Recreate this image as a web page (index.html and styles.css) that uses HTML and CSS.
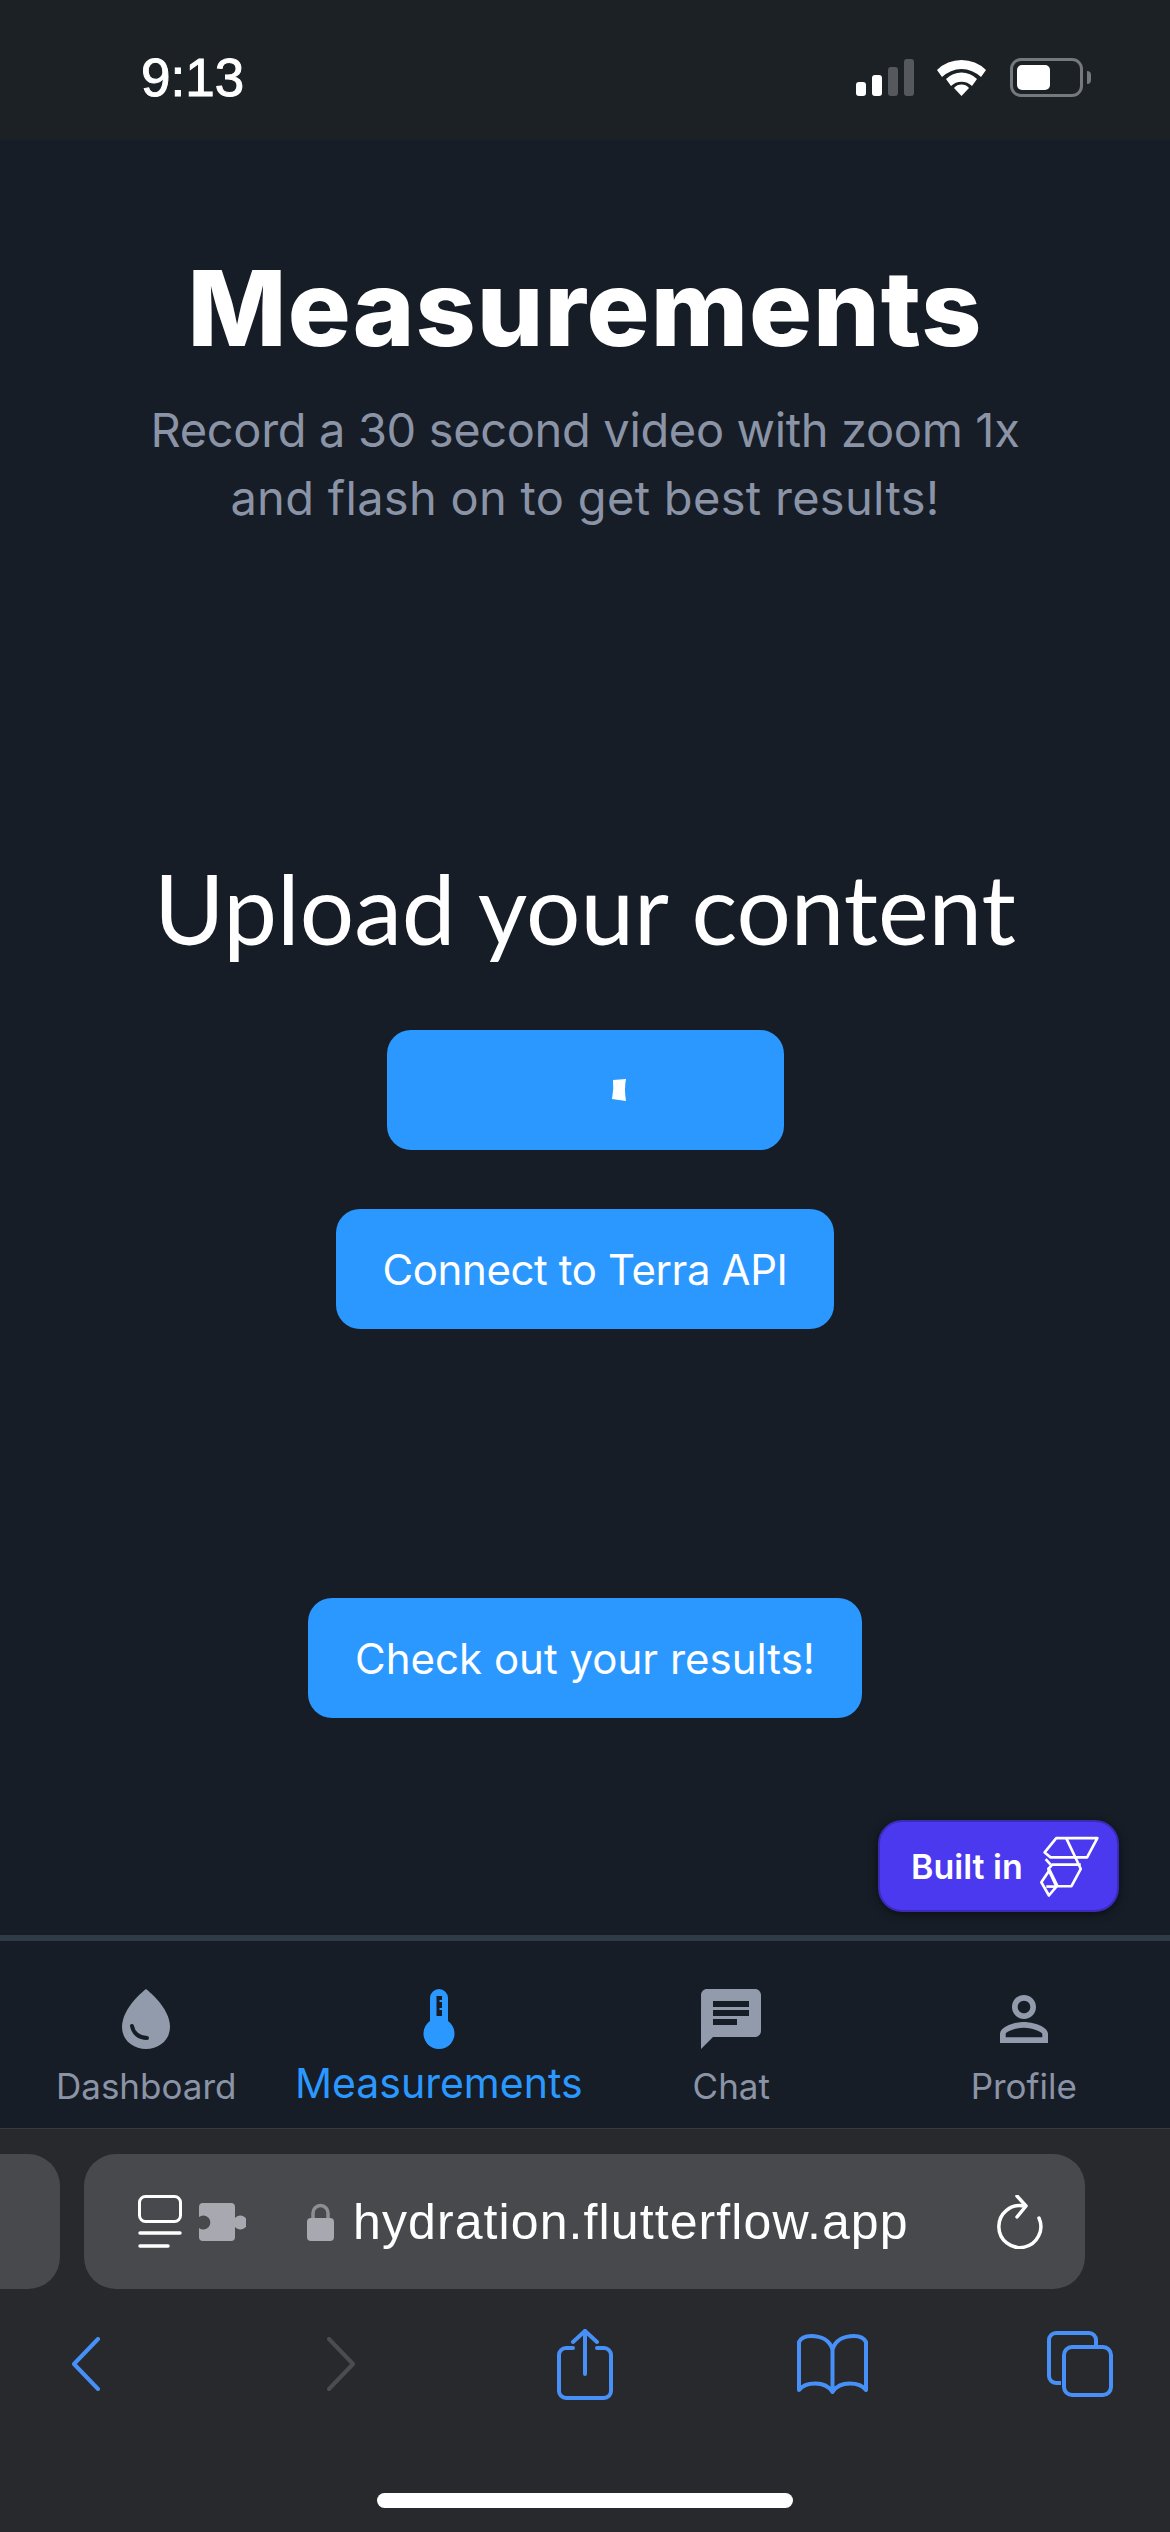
FILE: index.html

```html
<!DOCTYPE html>
<html lang="en">
<head>
  <meta charset="UTF-8">
  <meta name="viewport" content="width=device-width, initial-scale=1.0">
  <title>Measurements</title>
  <link rel="stylesheet" href="styles.css">
</head>
<body>
  <div class="phone">
    <div class="status-bar">
      <span class="status-time">9:13</span>
      <div class="status-icons">
        <div class="signal">
          <span class="bar bar-1"></span>
          <span class="bar bar-2"></span>
          <span class="bar bar-3 off"></span>
          <span class="bar bar-4 off"></span>
        </div>
        <svg class="wifi" width="49" height="37" viewBox="0 0 49 37">
          <path d="M0 11 A35 35 0 0 1 49 11 L44 18 A28 28 0 0 0 5 18 Z" fill="#fff"/>
          <path d="M9 22 A22 22 0 0 1 40 22 L35 29 A15 15 0 0 0 14 29 Z" fill="#fff" transform="translate(0 -2)"/>
          <path d="M17 29 A10 10 0 0 1 32 29 L24.5 37 Z" fill="#fff"/>
        </svg>
        <div class="battery">
          <span class="battery-fill"></span>
        </div>
        <span class="battery-cap"></span>
      </div>
    </div>

    <main class="content">
      <h1 class="page-title">Measurements</h1>
      <p class="page-sub">Record a 30 second video with zoom 1x<br><span class="sub-wide">and flash on to get best results!</span></p>
      <h2 class="upload-title">Upload your content</h2>
      <button class="btn btn-upload">
        <svg width="16" height="22" viewBox="0 0 16 22"><path d="M2 1 L15 0 Q13 10 15 22 L1 20 Q3 10 2 1 Z" fill="#fff"/></svg>
      </button>
      <button class="btn btn-terra">Connect to Terra API</button>
      <button class="btn btn-results">Check out your results!</button>

      <div class="built-in">
        <span>Built in</span>
        <svg width="63" height="65" viewBox="590 130 190 195" fill="none" stroke="#fff" stroke-width="8" stroke-linejoin="round">
          <path d="M642 142 H766 L735 200 H625 L607 185 Z"/>
          <path d="M672 142 L702 205 L716 235 L688 287 H642 L618 235 L630 222 H716"/>
          <path d="M610 205 L625 222"/>
          <path d="M622 238 L645 285 L620 315 L597 275 Z"/>
          <path d="M612 288 H642"/>
        </svg>
      </div>
    </main>

    <nav class="tab-bar">
      <div class="tab">
        <svg class="tab-icon" width="72" height="72" viewBox="0 0 72 72">
          <path d="M36 6 C36 6 12 24 12 44 C12 57 23 66 36 66 C49 66 60 57 60 44 C60 24 36 6 36 6 Z" fill="#929bab"/>
          <path d="M22 43 C23 50 29 55 37 55" fill="none" stroke="#161d26" stroke-width="4" stroke-linecap="round"/>
        </svg>
        <span class="tab-label">Dashboard</span>
      </div>
      <div class="tab active">
        <svg class="tab-icon" width="72" height="72" viewBox="0 0 72 72">
          <path d="M27 15 A9 9 0 0 1 45 15 V38 A15.5 15.5 0 1 1 27 38 Z" fill="#2b98ff"/>
          <path d="M33.5 13 H39 V17 H36.5 V19 H39 V25 H36.5 V27 H39 V33 H33.5 Z" fill="#161d26"/>
        </svg>
        <span class="tab-label">Measurements</span>
      </div>
      <div class="tab">
        <svg class="tab-icon" width="72" height="72" viewBox="0 0 24 24">
          <path d="M20 2H4c-1.1 0-1.99.9-1.99 2L2 22l4-4h14c1.1 0 2-.9 2-2V4c0-1.1-.9-2-2-2zM6 9h12v2H6V9zm8 5H6v-2h8v2zm4-6H6V6h12v2z" fill="#929bab"/>
        </svg>
        <span class="tab-label">Chat</span>
      </div>
      <div class="tab">
        <svg class="tab-icon" width="72" height="72" viewBox="0 0 24 24">
          <path d="M12 5.9c1.16 0 2.1.94 2.1 2.1s-.94 2.1-2.1 2.1S9.9 9.16 9.9 8s.94-2.1 2.1-2.1m0 9c2.97 0 6.1 1.46 6.1 2.1v1.1H5.9V17c0-.64 3.13-2.1 6.1-2.1M12 4C9.79 4 8 5.79 8 8s1.79 4 4 4 4-1.79 4-4-1.79-4-4-4zm0 9c-2.67 0-8 1.34-8 4v3h16v-3c0-2.66-5.33-4-8-4z" fill="#929bab"/>
        </svg>
        <span class="tab-label">Profile</span>
      </div>
    </nav>

    <div class="browser">
      <div class="url-row">
        <div class="prev-tab"></div>
        <div class="url-bar">
          <svg class="reader" width="44" height="53" viewBox="0 0 44 53" fill="none" stroke="#fff" stroke-linecap="round">
            <rect x="1.5" y="1.5" width="41" height="25" rx="6" stroke-width="3"/>
            <path d="M2 38 H42" stroke-width="3.5"/>
            <path d="M2 51 H30" stroke-width="3.5"/>
          </svg>
          <svg class="puzzle" width="47" height="38" viewBox="0 0 47 38">
            <path d="M4 0 H32 A4 4 0 0 1 36 4 V15 A7 7 0 1 1 36 24 V34 A4 4 0 0 1 32 38 H4 A4 4 0 0 1 0 34 V25 A7 7 0 1 0 0 14 V4 A4 4 0 0 1 4 0 Z" fill="#a8a9b0"/>
          </svg>
          <svg class="lock" width="27" height="38" viewBox="0 0 27 38">
            <path d="M6 16 V10 A7.5 7.5 0 0 1 21 10 V16" fill="none" stroke="#8e8f94" stroke-width="3.5"/>
            <rect y="15" width="27" height="23" rx="4" fill="#a8a9b0"/>
          </svg>
          <span class="url-text">hydration.flutterflow.app</span>
          <svg class="reload" width="46" height="54" viewBox="0 0 46 54" fill="none" stroke="#fff" stroke-width="3.5" stroke-linecap="round" stroke-linejoin="round">
            <path d="M27 11 A21 21 0 1 0 42 23"/>
            <path d="M20 1 L29 11 L20 22"/>
          </svg>
        </div>
      </div>

      <div class="toolbar">
        <svg class="tool-back" width="28" height="54" viewBox="0 0 28 54" fill="none" stroke="#4790f7" stroke-width="4" stroke-linecap="round" stroke-linejoin="round">
          <path d="M26 2 L2 27 L26 52"/>
        </svg>
        <svg class="tool-forward" width="30" height="54" viewBox="0 0 30 54" fill="none" stroke="#4b4c4f" stroke-width="4" stroke-linecap="round" stroke-linejoin="round">
          <path d="M3 2 L27 27 L3 52"/>
        </svg>
        <svg class="tool-share" width="56" height="71" viewBox="0 0 56 71" fill="none" stroke="#4790f7" stroke-width="4" stroke-linecap="round" stroke-linejoin="round">
          <path d="M16 19 H9 A7 7 0 0 0 2 26 V62 A7 7 0 0 0 9 69 H47 A7 7 0 0 0 54 62 V26 A7 7 0 0 0 47 19 H40"/>
          <path d="M28 45 V2"/>
          <path d="M16 13 L28 2 L40 13"/>
        </svg>
        <svg class="tool-book" width="71" height="60" viewBox="0 0 71 60" fill="none" stroke="#4790f7" stroke-width="4" stroke-linecap="round" stroke-linejoin="round">
          <path d="M35.5 58 V16 C33 6 24 2 14 2 C8 2 4 4 2 8 V56 C8 48 28 46 35.5 58 C43 46 63 48 69 56 V8 C67 4 63 2 57 2 C47 2 38 6 35.5 16"/>
        </svg>
        <svg class="tool-tabs" width="66" height="66" viewBox="0 0 66 66" fill="none" stroke="#4790f7" stroke-width="4">
          <path d="M14 52 H9 A7 7 0 0 1 2 45 V9 A7 7 0 0 1 9 2 H42 A7 7 0 0 1 49 9 V15"/>
          <rect x="17" y="16" width="47" height="48" rx="8"/>
        </svg>
      </div>
      <div class="home-indicator"></div>
    </div>
  </div>
</body>
</html>
```

FILE: styles.css

```css
* {
  box-sizing: border-box;
}
body {
  margin: 0;
  background-color: #161d26;
  font-family: Inter, sans-serif;
}
.phone {
  position: relative;
  width: 1170px;
  height: 2532px;
  display: flex;
  flex-direction: column;
  overflow: hidden;
}

/* status bar */
.status-bar {
  height: 140px;
  flex: none;
  background-color: #1c2126;
  display: flex;
  justify-content: space-between;
  align-items: flex-start;
  padding: 49px 79px 0 141px;
}
.status-time {
  font-family: "Liberation Sans", sans-serif;
  font-size: 53px;
  line-height: 58px;
  color: #fff;
  -webkit-text-stroke: 1px #fff;
}
.status-icons {
  display: flex;
  align-items: center;
  margin-top: 9px;
}
.signal {
  display: flex;
  align-items: flex-end;
  gap: 6.5px;
  height: 37px;
  margin-right: 23px;
}
.bar {
  width: 9.6px;
  background-color: #fff;
  border-radius: 3px;
}
.bar.off {
  background-color: #55585c;
}
.bar-1 { height: 14px; }
.bar-2 { height: 21px; }
.bar-3 { height: 29px; }
.bar-4 { height: 37px; }
.wifi {
  margin-right: 24px;
}
.battery {
  width: 73px;
  height: 39px;
  border: 3px solid #75787c;
  border-radius: 11px;
  padding: 4px;
}
.battery-fill {
  display: block;
  width: 33px;
  height: 100%;
  background-color: #fff;
  border-radius: 5px;
}
.battery-cap {
  width: 4px;
  height: 13px;
  margin-left: 4px;
  background-color: #75787c;
  border-radius: 0 4px 4px 0;
}

/* page content */
.content {
  flex: 1;
  display: flex;
  flex-direction: column;
  align-items: center;
  padding-top: 105px;
}
.page-title {
  margin: 0;
  font-family: Inter, sans-serif;
  font-size: 105px;
  font-weight: 800;
  line-height: 126px;
  color: #fff;
  letter-spacing: 1px;
}
.page-sub {
  margin: 25px 0 0;
  font-size: 47px;
  line-height: 68px;
  font-weight: 400;
  text-align: center;
  color: #8b94a6;
  letter-spacing: -0.35px;
}
.sub-wide {
  letter-spacing: 0.3px;
}
.upload-title {
  margin: 318px 0 0;
  font-family: Lato, sans-serif;
  font-size: 96px;
  line-height: 116px;
  font-weight: 400;
  color: #fff;
}
.btn {
  display: flex;
  align-items: center;
  justify-content: center;
  height: 120px;
  border: 0;
  border-radius: 24px;
  background-color: #2b98ff;
  color: #fff;
  font-family: Inter, sans-serif;
  font-size: 42px;
  font-weight: 400;
  padding: 0;
}
.btn-upload {
  width: 397px;
  margin-top: 64px;
}
.btn-upload svg {
  margin-left: 68px;
}
.btn-terra {
  width: 498px;
  margin-top: 59px;
  letter-spacing: -0.4px;
}
.btn-results {
  width: 554px;
  margin-top: 269px;
}
.built-in {
  position: absolute;
  left: 878px;
  top: 1820px;
  width: 241px;
  height: 92px;
  display: flex;
  align-items: center;
  gap: 16px;
  padding-left: 31px;
  background-color: #4b39ef;
  border: 2px solid #3a2cb8;
  border-radius: 24px;
  box-shadow: 0 2px 8px rgba(0, 0, 0, 0.5);
  color: #fff;
  font-size: 34px;
  font-weight: 600;
}

/* bottom nav */
.tab-bar {
  flex: none;
  height: 194px;
  display: grid;
  grid-template-columns: repeat(4, 1fr);
  border-top: 6px solid #2f3b47;
  border-bottom: 1px solid #3a3b3e;
  padding-top: 42px;
}
.tab {
  display: flex;
  flex-direction: column;
  align-items: center;
}
.tab-icon {
  display: block;
}
.tab-label {
  margin-top: 10px;
  font-size: 35px;
  line-height: 42px;
  color: #8b94a6;
}
.active .tab-label {
  margin-top: 4px;
  font-size: 41px;
  line-height: 48px;
  color: #2b98ff;
}

/* safari chrome */
.browser {
  flex: none;
  height: 403px;
  background-color: #28292c;
}
.url-row {
  display: flex;
  gap: 24px;
  padding-top: 25px;
}
.prev-tab {
  width: 60px;
  height: 135px;
  background-color: #48494c;
  border-radius: 0 32px 32px 0;
}
.url-bar {
  width: 1001px;
  height: 135px;
  background-color: #48494c;
  border-radius: 32px;
  display: flex;
  align-items: center;
  padding-left: 54px;
}
.reader {
  margin-right: 17px;
}
.puzzle {
  margin-right: 61px;
}
.lock {
  margin-right: 19px;
}
.url-text {
  width: 554px;
  font-family: "Liberation Sans", sans-serif;
  font-size: 50px;
  line-height: 60px;
  color: #fff;
  white-space: nowrap;
  letter-spacing: 1.1px;
}
.reload {
  margin-left: 90px;
}
.toolbar {
  height: 150px;
  display: flex;
  align-items: center;
  padding-left: 72px;
}
.tool-forward { margin-left: 226px; }
.tool-share { margin-left: 201px; }
.tool-book { margin-left: 184px; }
.tool-tabs { margin-left: 179px; }
.home-indicator {
  width: 416px;
  height: 15px;
  margin: 54px auto 0;
  background-color: #fff;
  border-radius: 8px;
}
```
